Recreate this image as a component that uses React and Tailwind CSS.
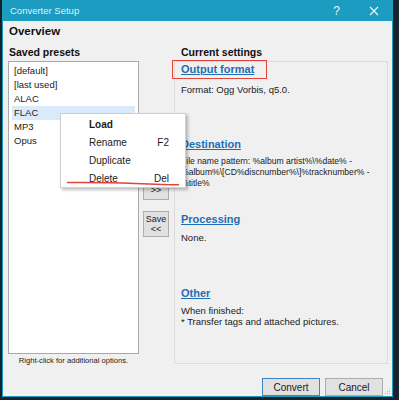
import React from "react";

const F = { fontFamily: '"Liberation Sans", Arial, sans-serif' };

function Link({ children }) {
  return (
    <div className="h-[16px] flex items-center text-[11px] font-bold underline text-[#1f6db5] leading-none">
      {children}
    </div>
  );
}

function Line({ children, small }) {
  return (
    <div className={`h-[11px] leading-[11px] text-[#1a1a1a] whitespace-nowrap ${small ? "text-[8.6px]" : "text-[9.5px]"}`}>
      {children}
    </div>
  );
}

export default function App() {
  const presets = ["[default]", "[last used]", "ALAC", "FLAC", "MP3", "Opus"];
  return (
    <div style={F} className="w-[399px] h-[400px] bg-[#17242b] overflow-hidden">
      <div className="relative ml-[2px] w-[391px] h-[397px] border border-[#1b9cc0] bg-[#f0f0f0] flex flex-col">
        {/* title bar */}
        <div className="h-[20px] bg-[#1b9cc0] flex items-center pl-[7px] text-[9.5px] text-[#dff3f8]">
          <span>Converter Setup</span>
          <span className="ml-auto mr-[29px] text-[12px] text-[#e6f6fa]">?</span>
          <svg width="10" height="10" viewBox="0 0 10 10" className="mr-[13px]">
            <path d="M1 1L9 9M9 1L1 9" stroke="#eaf7fb" strokeWidth="1.2" />
          </svg>
        </div>

        {/* Overview */}
        <div className="h-[22px] flex items-center pl-[6px] text-[11.5px] font-bold text-[#111]">Overview</div>

        {/* main */}
        <div className="mt-[2px] flex pl-[5px]">
          {/* left column */}
          <div className="w-[131px] flex flex-col">
            <div className="h-[17px] pl-[1px] flex items-center text-[10.5px] font-bold text-[#111]">Saved presets</div>
            <div className="h-[293px] border border-[#a9a9a9] bg-white pt-[2px] px-[3px]">
              {presets.map((p) => (
                <div
                  key={p}
                  className={`h-[14px] pl-[2px] flex items-center text-[9.5px] text-[#1a1a1a] ${p === "FLAC" ? "bg-[#d9ebfa]" : ""}`}
                >
                  {p}
                </div>
              ))}
            </div>
            <div className="h-[14px] flex items-center justify-center text-[7.6px] text-[#1a1a1a]">
              Right-click for additional options.
            </div>
          </div>

          {/* middle buttons */}
          <div className="ml-[4px] w-[26px] flex flex-col pt-[138px]">
            <div className="h-[18px] border border-[#adadad] bg-[#e1e1e1] flex items-center justify-center text-[9px] text-[#222]">
              &gt;&gt;
            </div>
            <div className="mt-[11px] h-[26px] border border-[#adadad] bg-[#e1e1e1] flex flex-col items-center justify-center text-[9px] leading-[10px] text-[#222]">
              <span>Save</span>
              <span>&lt;&lt;</span>
            </div>
          </div>

          {/* right column */}
          <div className="ml-[5px] w-[214px] flex flex-col">
            <div className="h-[17px] pl-[7px] flex items-center text-[10.5px] font-bold text-[#111]">Current settings</div>
            <div className="h-[303px] border border-[#dcdcdc] pl-[6px]">
              <div className="-ml-[9px] -mt-[2px] w-[95px] h-[19px] border-[1.5px] border-[#e2433b] pl-[8px] flex items-center">
                <Link>Output format</Link>
              </div>
              <div className="mt-[5px]">
                <Line>Format: Ogg Vorbis, q5.0.</Line>
              </div>
              <div className="mt-[41px]">
                <Link>Destination</Link>
              </div>
              <div className="mt-[4px]">
                <Line small>File name pattern: %album artist%\%date% -</Line>
                <Line small>%album%\[CD%discnumber%\]%tracknumber% -</Line>
                <Line small>%title%</Line>
              </div>
              <div className="mt-[22px]">
                <Link>Processing</Link>
              </div>
              <div className="mt-[5px]">
                <Line>None.</Line>
              </div>
              <div className="mt-[42px]">
                <Link>Other</Link>
              </div>
              <div className="mt-[4px]">
                <Line>When finished:</Line>
                <Line>* Transfer tags and attached pictures.</Line>
              </div>
            </div>
          </div>
        </div>

        {/* bottom buttons */}
        <div className="mt-[10px] flex justify-end pr-[9px] gap-[5px]">
          <div className="w-[58px] h-[18px] border-[1.5px] border-[#3b86c6] bg-[#e1e1e1] flex items-center justify-center text-[10px] text-[#1a1a1a]">
            Convert
          </div>
          <div className="w-[58px] h-[18px] border border-[#adadad] bg-[#e1e1e1] flex items-center justify-center text-[10px] text-[#1a1a1a]">
            Cancel
          </div>
        </div>

        {/* resize grip */}
        <svg width="7" height="7" viewBox="0 0 7 7" className="absolute right-[1px] bottom-[1px]">
          <rect x="5" y="1" width="1" height="1" fill="#b8b8b8" />
          <rect x="3" y="3" width="1" height="1" fill="#b8b8b8" />
          <rect x="5" y="3" width="1" height="1" fill="#b8b8b8" />
          <rect x="1" y="5" width="1" height="1" fill="#b8b8b8" />
          <rect x="3" y="5" width="1" height="1" fill="#b8b8b8" />
          <rect x="5" y="5" width="1" height="1" fill="#b8b8b8" />
        </svg>

        {/* context menu */}
        <div className="absolute left-[57px] top-[112px] w-[126px] h-[75px] bg-white border border-[#cfcfcf] shadow-[2px_2px_3px_rgba(0,0,0,0.25)] pt-[1px] text-[10px] text-[#1a1a1a]">
          <div className="h-[18px] flex items-center pl-[28px] font-bold">Load</div>
          <div className="h-[18px] flex items-center pl-[28px] pr-[16px] justify-between">
            <span>Rename</span>
            <span>F2</span>
          </div>
          <div className="h-[18px] flex items-center pl-[28px]">Duplicate</div>
          <div className="h-[18px] flex items-center pl-[28px] pr-[16px] justify-between">
            <span>Delete</span>
            <span>Del</span>
          </div>
        </div>

        {/* red underline annotation */}
        <svg width="120" height="8" viewBox="0 0 120 8" className="absolute left-[62px] top-[178px]">
          <path d="M2 3.5 Q 40 3.2 70 4.5 T 114 5.8" stroke="#e2433b" strokeWidth="1.6" fill="none" />
        </svg>
      </div>
    </div>
  );
}
